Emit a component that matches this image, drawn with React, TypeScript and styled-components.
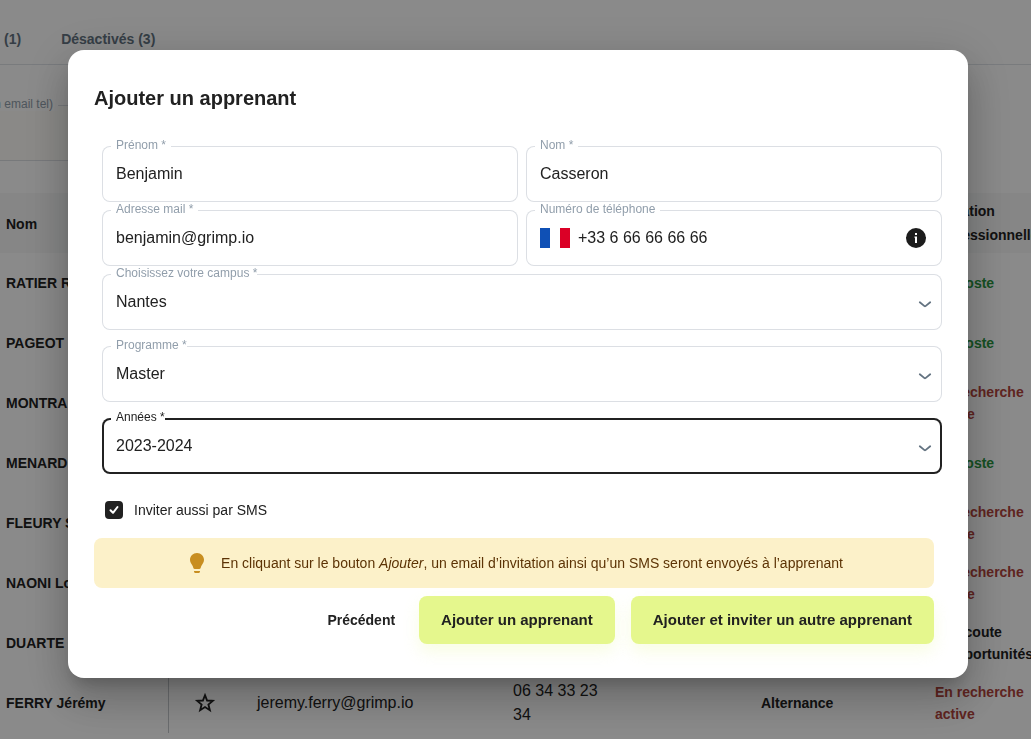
import React from "react";
import styled, { createGlobalStyle } from "styled-components";

const GlobalStyle = createGlobalStyle`
  * { box-sizing: border-box; }
  body {
    margin: 0;
    overflow: hidden;
    background: #fff;
    color: #212121;
    font-family: "Liberation Sans", Arial, Helvetica, sans-serif;
    font-size: 14px;
  }
  input, select, button { font: inherit; color: inherit; }
`;

const Page = styled.div`
  height: 100vh;
  overflow: hidden;
`;

const Tabs = styled.nav`
  display: flex;
  align-items: center;
  gap: 40px;
  height: 65px;
  padding: 14px 4px 0;
  border-bottom: 1px solid #dfe3e8;
`;

const Tab = styled.a`
  color: #637381;
  font-weight: 700;
  line-height: 22px;
  text-decoration: none;
`;

const SearchBar = styled.div`
  display: flex;
  align-items: flex-end;
  height: 128px;
  padding-bottom: 32px;
`;

const SearchBox = styled.div`
  position: relative;
  flex: 0 1 320px;
  height: 56px;
  background: #fffefa;
  border: solid #dcdfe4;
  border-width: 1px 0;
`;

const SearchLabel = styled.label`
  position: absolute;
  top: -9px;
  left: 0;
  display: flex;
  justify-content: flex-end;
  width: 58px;
  padding-right: 5px;
  overflow: hidden;
  background: #fff;
  color: #919eab;
  font-size: 12px;
  line-height: 14px;
  white-space: nowrap;
`;

const SearchInput = styled.input`
  width: 100%;
  height: 100%;
  border: 0;
  background: transparent;
`;

const Table = styled.table`
  width: 100%;
  table-layout: fixed;
  border-collapse: collapse;
`;

const HeadCell = styled.th`
  height: 60px;
  padding: 0 0 0 16px;
  background: #f7f8f8;
  font-size: 14px;
  line-height: 24px;
  text-align: left;

  &:first-child { padding: 2px 0 0 6px; }
`;

const NameCell = styled.td`
  height: 60px;
  padding: 0 0 0 6px;
  border-right: 1px solid #c4c8cc;
  font-weight: 700;
  white-space: nowrap;
`;

const Cell = styled.td<{ $strong?: boolean }>`
  padding: 0 0 0 16px;
  font-size: ${(p) => (p.$strong ? "14px" : "16px")};
  font-weight: ${(p) => (p.$strong ? 700 : 400)};
  line-height: ${(p) => (p.$strong ? "22px" : "24px")};
`;

const PhoneText = styled.div`
  width: 100px;
`;

const IconCell = styled.td`
  padding: 0;
  text-align: center;

  svg { display: block; margin: 0 auto; }
`;

const statusColor = { poste: "#28943f", recherche: "#b0433b", ecoute: "#212121" };

const StatusCell = styled.td<{ $kind: keyof typeof statusColor }>`
  padding: 0 0 0 16px;
  color: ${(p) => statusColor[p.$kind]};
  font-weight: 700;
  line-height: 22px;
`;

const Backdrop = styled.div`
  position: fixed;
  inset: 0;
  display: flex;
  align-items: center;
  justify-content: center;
  padding: 0 0 11px 5px;
  background: rgba(0, 0, 0, 0.46);
`;

const Dialog = styled.form`
  width: 900px;
  max-width: calc(100% - 64px);
  padding: 33px 34px 34px 26px;
  border-radius: 16px;
  background: #fff;
  box-shadow: 0 11px 15px -7px rgba(0, 0, 0, 0.2), 0 24px 38px 3px rgba(0, 0, 0, 0.14),
    0 9px 46px 8px rgba(0, 0, 0, 0.12);
`;

const Title = styled.h2`
  margin: 0 0 33px;
  font-size: 20px;
  line-height: 30px;
`;

const Fields = styled.div`
  display: grid;
  gap: 16px;
  margin: 0 -8px 0 8px;
`;

const FieldGrid = styled.div`
  display: grid;
  grid-template-columns: 1fr 1fr;
  gap: 8px;
`;

const Stack = styled.div`
  display: grid;
  gap: 8px;
`;

const FieldBox = styled.div<{ $active?: boolean }>`
  position: relative;
  display: flex;
  align-items: center;
  gap: 8px;
  height: 56px;
  padding: 0 14px;
  border-radius: 8px;
  box-shadow: inset 0 0 0 ${(p) => (p.$active ? "2px #212121" : "1px #dcdfe4")};
`;

const FieldLabel = styled.label<{ $active?: boolean; $tight?: boolean }>`
  position: absolute;
  top: -7px;
  left: 9px;
  padding: 0 ${(p) => (p.$tight ? "0" : "5px")} 0 5px;
  background: #fff;
  color: ${(p) => (p.$active ? "#212121" : "#919eab")};
  font-size: 12px;
  line-height: 12px;
`;

const TextInput = styled.input`
  flex: 1;
  min-width: 0;
  height: 54px;
  padding: 0;
  border: 0;
  outline: 0;
  background: transparent;
  font-size: 16px;
`;

const Select = styled.select`
  flex: 1;
  height: 54px;
  padding: 0 0 2px;
  border: 0;
  outline: 0;
  appearance: none;
  background: transparent;
  font-size: 16px;
`;

const Chevron = styled.svg`
  position: absolute;
  top: 20px;
  right: 7px;
  pointer-events: none;
`;

const CheckRow = styled.label`
  display: flex;
  align-items: center;
  gap: 11px;
  margin: 25px 0 17px 11px;
  line-height: 22px;
`;

const CheckMark = styled.span`
  position: relative;
  display: flex;
  width: 18px;
  height: 18px;
`;

const Checkbox = styled.input`
  width: 18px;
  height: 18px;
  margin: 0;
  appearance: none;
  border-radius: 4px;
  border: 2px solid #212121;

  &:checked { background: #212121; }
  & + svg { position: absolute; inset: 0; pointer-events: none; }
  &:not(:checked) + svg { display: none; }
`;

const Notice = styled.div`
  display: flex;
  align-items: center;
  justify-content: center;
  gap: 12px;
  min-height: 50px;
  border-radius: 8px;
  background: #fcf1c9;
  color: #5c3305;
  line-height: 22px;
`;

const Actions = styled.div`
  display: flex;
  justify-content: flex-end;
  gap: 16px;
  margin-top: 8px;
`;

const PlainButton = styled.button`
  height: 48px;
  padding: 0 8px;
  border: 0;
  background: transparent;
  font-weight: 700;
`;

const PrimaryButton = styled.button`
  height: 48px;
  padding: 0 22px 2px;
  border: 0;
  border-radius: 8px;
  background: #e5f78d;
  box-shadow: 0 8px 16px rgba(229, 247, 141, 0.24);
  font-size: 15px;
  font-weight: 700;
`;

type StatusKind = keyof typeof statusColor;

interface Learner {
  name: string;
  status: string;
  kind: StatusKind;
  email?: string;
  phone?: string;
  contract?: string;
}

const learners: Learner[] = [
  { name: "RATIER R", status: "En poste", kind: "poste" },
  { name: "PAGEOT", status: "En poste", kind: "poste" },
  { name: "MONTRA", status: "En recherche active", kind: "recherche" },
  { name: "MENARD", status: "En poste", kind: "poste" },
  { name: "FLEURY S", status: "En recherche active", kind: "recherche" },
  { name: "NAONI Lo", status: "En recherche active", kind: "recherche" },
  { name: "DUARTE", status: "À l’écoute d’opportunités", kind: "ecoute" },
  {
    name: "FERRY Jérémy",
    status: "En recherche active",
    kind: "recherche",
    email: "jeremy.ferry@grimp.io",
    phone: "06 34 33 23 34",
    contract: "Alternance",
  },
];

function StarIcon() {
  return (
    <svg width="22" height="22" viewBox="0 0 24 24" fill="none" stroke="#212121" strokeWidth="2" aria-hidden="true">
      <path d="M12 3.500 L14.300 9.300 L20.500 9.700 L15.700 13.700 L17.300 19.800 L12 16.400 L6.700 19.800 L8.300 13.700 L3.500 9.700 L9.700 9.300 Z" />
    </svg>
  );
}

function FlagFrance() {
  return (
    <svg width="30" height="20" viewBox="0 0 30 20" aria-hidden="true">
      <rect width="10" height="20" fill="#0f50b5" />
      <rect x="10" width="10" height="20" fill="#fff" />
      <rect x="20" width="10" height="20" fill="#db0026" />
    </svg>
  );
}

function InfoIcon() {
  return (
    <svg width="24" height="24" viewBox="0 0 24 24" aria-hidden="true">
      <circle cx="12" cy="12" r="10" fill="#1c1c1c" />
      <path d="M11 7h2v2h-2zM10.500 10.500H13V17h-2v-5.200h-.5z" fill="#fff" />
    </svg>
  );
}

function BulbIcon() {
  return (
    <svg width="24" height="24" viewBox="0 0 24 24" fill="#c88e20" aria-hidden="true">
      <path d="M12 2C8.100 2 5 5 5 8.800c0 2.200 1 3.700 2.100 5.100.6.800.9 1.700 1.100 2.700.1.800.6 1.400 1.400 1.400h4.800c.8 0 1.300-.6 1.400-1.400.2-1 .5-1.900 1.100-2.700C18 12.500 19 11 19 8.800 19 5 15.900 2 12 2z" />
      <path d="M9 20h6v.5c0 .9-.6 1.500-1.500 1.500h-3c-.9 0-1.500-.6-1.500-1.500z" />
    </svg>
  );
}

interface FieldProps {
  id: string;
  label: string;
  value: string;
  type?: string;
  before?: React.ReactNode;
  after?: React.ReactNode;
}

function Field({ id, label, value, type = "text", before, after }: FieldProps) {
  return (
    <FieldBox>
      <FieldLabel htmlFor={id}>{label}</FieldLabel>
      {before}
      <TextInput id={id} type={type} defaultValue={value} />
      {after}
    </FieldBox>
  );
}

interface SelectFieldProps {
  id: string;
  label: string;
  value: string;
  active?: boolean;
}

function SelectField({ id, label, value, active }: SelectFieldProps) {
  return (
    <FieldBox $active={active}>
      <FieldLabel htmlFor={id} $active={active} $tight>
        {label}
      </FieldLabel>
      <Select id={id} defaultValue={value}>
        <option>{value}</option>
      </Select>
      <Chevron width="20" height="20" viewBox="0 0 20 20" fill="none" aria-hidden="true">
        <path
          d="M4.800 8.200 L9.500 12.100 Q10 12.500 10.500 12.100 L15.200 8.200"
          stroke="#637381"
          strokeWidth="1.800"
          strokeLinecap="round"
          strokeLinejoin="round"
        />
      </Chevron>
    </FieldBox>
  );
}

export default function App() {
  return (
    <>
      <GlobalStyle />
      <Page>
        <Tabs>
          <Tab href="#attente">(1)</Tab>
          <Tab href="#desactives">Désactivés (3)</Tab>
        </Tabs>
        <SearchBar>
          <SearchBox>
            <SearchLabel htmlFor="search">n email tel)</SearchLabel>
            <SearchInput id="search" type="search" />
          </SearchBox>
        </SearchBar>
        <Table>
          <colgroup>
            <col style={{ width: 168 }} />
            <col style={{ width: 73 }} />
            <col style={{ width: 256 }} />
            <col style={{ width: 248 }} />
            <col style={{ width: 174 }} />
            <col />
          </colgroup>
          <thead>
            <tr>
              <HeadCell>Nom</HeadCell>
              <HeadCell colSpan={4} />
              <HeadCell>Situation professionnelle</HeadCell>
            </tr>
          </thead>
          <tbody>
            {learners.map((l) => (
              <tr key={l.name}>
                <NameCell>{l.name}</NameCell>
                <IconCell>
                  <StarIcon />
                </IconCell>
                <Cell>{l.email}</Cell>
                <Cell>
                  <PhoneText>{l.phone}</PhoneText>
                </Cell>
                <Cell $strong>{l.contract}</Cell>
                <StatusCell $kind={l.kind}>{l.status}</StatusCell>
              </tr>
            ))}
          </tbody>
        </Table>
      </Page>
      <Backdrop>
        <Dialog role="dialog" aria-labelledby="dialog-title" onSubmit={(e) => e.preventDefault()}>
          <Title id="dialog-title">Ajouter un apprenant</Title>
          <Fields>
            <Stack>
              <FieldGrid>
                <Field id="firstname" label="Prénom *" value="Benjamin" />
                <Field id="lastname" label="Nom *" value="Casseron" />
                <Field id="email" label="Adresse mail *" value="benjamin@grimp.io" type="email" />
                <Field
                  id="phone"
                  label="Numéro de téléphone"
                  value="+33 6 66 66 66 66"
                  type="tel"
                  before={<FlagFrance />}
                  after={<InfoIcon />}
                />
              </FieldGrid>
              <SelectField id="campus" label="Choisissez votre campus *" value="Nantes" />
            </Stack>
            <SelectField id="programme" label="Programme *" value="Master" />
            <SelectField id="years" label="Années *" value="2023-2024" active />
          </Fields>
          <CheckRow>
            <CheckMark>
              <Checkbox type="checkbox" defaultChecked />
              <svg width="18" height="18" viewBox="0 0 18 18" fill="none" aria-hidden="true">
                <path d="M5.500 9.200 L8 11.800 L12.500 6" stroke="#fff" strokeWidth="2" strokeLinecap="round" strokeLinejoin="round" />
              </svg>
            </CheckMark>
            Inviter aussi par SMS
          </CheckRow>
          <Notice>
            <BulbIcon />
            <span>
              En cliquant sur le bouton <em>Ajouter</em>, un email d’invitation ainsi qu’un SMS seront
              envoyés à l’apprenant
            </span>
          </Notice>
          <Actions>
            <PlainButton type="button">Précédent</PlainButton>
            <PrimaryButton type="submit">Ajouter un apprenant</PrimaryButton>
            <PrimaryButton type="button">Ajouter et inviter un autre apprenant</PrimaryButton>
          </Actions>
        </Dialog>
      </Backdrop>
    </>
  );
}
